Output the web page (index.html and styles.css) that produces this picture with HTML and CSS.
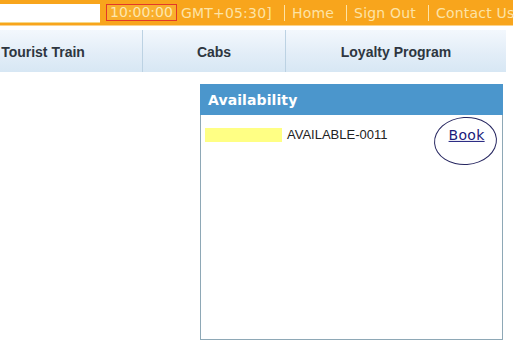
FILE: index.html
```html
<!DOCTYPE html>
<html>
<head>
<meta charset="utf-8">
<link rel="stylesheet" href="styles.css">
</head>
<body>
<div class="topbar">
  <div class="search"></div>
  <span class="clock">10:00:00</span>
  <span class="tz">GMT+05:30]</span>
  <a class="toplink" href="#">Home</a>
  <a class="toplink" href="#">Sign Out</a>
  <a class="toplink" href="#">Contact Us</a>
</div>
<nav class="nav">
  <div class="cell first">Tourist Train</div>
  <div class="cell cabs">Cabs</div>
  <div class="cell loyalty">Loyalty Program</div>
</nav>
<div class="content">
  <section class="avail">
    <h2 class="avail-head">Availability</h2>
    <div class="row">
      <span class="mark"></span>
      <span class="code">AVAILABLE-0011</span>
      <span class="ring"><a class="book" href="#">Book</a></span>
    </div>
  </section>
</div>
</body>
</html>
```
FILE: styles.css
```css
html, body {
  margin: 0;
  padding: 0;
  background: #ffffff;
}
body {
  width: 520px;
  height: 346px;
  overflow: hidden;
  font-family: "DejaVu Sans", Verdana, sans-serif;
}
.topbar {
  width: 513px;
  height: 25px;
  background: #f8a51c;
  display: flex;
  align-items: center;
  color: #fde3a6;
  font-size: 14px;
  box-shadow: 0 1px 0 #fbd38c;
}
.search {
  width: 100px;
  height: 18px;
  margin-top: 1px;
  background: #ffffff;
  border-bottom: 1px solid #f5d98a;
  flex: none;
}
.clock {
  margin-left: 6px;
  border: 1px solid #e2382a;
  padding: 0 3px;
  height: 15px;
  line-height: 15px;
  background: #f9ae2c;
  color: #fde7ae;
}
.tz {
  margin-left: 4px;
  white-space: nowrap;
  letter-spacing: 0.2px;
}
.toplink {
  color: #fde3a6;
  text-decoration: none;
  white-space: nowrap;
  border-left: 1px solid #fde3a6;
  padding-left: 7px;
  margin-left: 12px;
  line-height: 16px;
  letter-spacing: 0.2px;
}
.nav {
  margin-top: 5px;
  height: 42px;
  width: 506px;
  display: flex;
  background: linear-gradient(#f3f8fd, #e4eef8 50%, #d7e7f4);
  font-family: "Liberation Sans", Arial, sans-serif;
  font-weight: bold;
  font-size: 14px;
  color: #2e3640;
}
.cell {
  display: flex;
  align-items: center;
  justify-content: center;
  flex: none;
  padding-top: 2px;
}
.first {
  width: 198px;
  margin-left: -56px;
  border-right: 1px solid #bcd2e3;
}
.cabs {
  width: 142px;
  border-right: 1px solid #bcd2e3;
}
.loyalty {
  flex: 1;
}
.content {
  padding: 12px 0 0 200px;
}
.avail {
  width: 301px;
  height: 255px;
  border: 1px solid #8ea8b6;
  border-top: none;
}
.avail-head {
  margin: 0 -1px;
  height: 31px;
  background: #4b96cc;
  color: #ffffff;
  font-size: 14px;
  font-weight: bold;
  line-height: 33px;
  padding-left: 8px;
  letter-spacing: 0.1px;
}
.row {
  display: flex;
  align-items: flex-start;
  padding-top: 2px;
}
.mark {
  width: 77px;
  height: 14px;
  margin-top: 11px;
  margin-left: 4px;
  background: #ffff84;
  flex: none;
}
.code {
  margin-left: 5px;
  margin-top: 10px;
  font-family: "Liberation Sans", Arial, sans-serif;
  font-size: 13px;
  color: #222222;
  line-height: 15px;
}
.ring {
  margin-left: auto;
  margin-right: 5px;
  width: 61px;
  height: 46px;
  border: 1px solid #262660;
  border-radius: 50%;
  display: flex;
  justify-content: center;
  align-items: flex-start;
  transform: rotate(-4deg);
}
.book {
  margin-top: 9px;
  margin-left: 3px;
  font-size: 14px;
  letter-spacing: 0.3px;
  color: #1a1a7a;
  text-decoration: underline;
  transform: rotate(4deg);
}
```
